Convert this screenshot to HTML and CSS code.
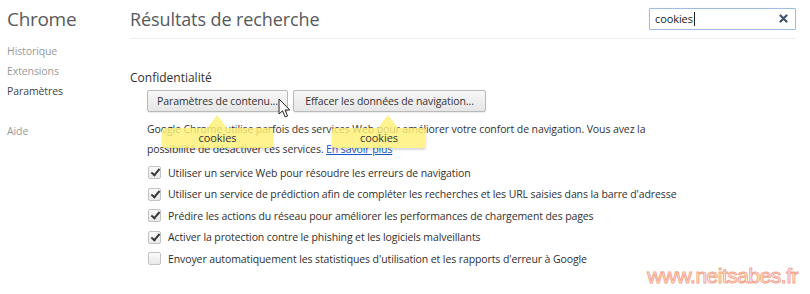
FILE: index.html
```html
<!DOCTYPE html>
<html lang="fr">
<head>
<meta charset="utf-8">
<title>Paramètres</title>
<link rel="stylesheet" href="styles.css">
</head>
<body>
<div class="page">
  <aside class="sidebar">
    <div class="brand">Chrome</div>
    <ul class="nav">
      <li>Historique</li>
      <li>Extensions</li>
      <li class="active">Paramètres</li>
      <li class="gap">Aide</li>
    </ul>
  </aside>
  <main class="main">
    <header class="head">
      <h1 class="title">Résultats de recherche</h1>
      <div class="search">
        <span class="query">cookies</span><span class="caret"></span>
        <svg class="clear" width="9" height="9" viewBox="0 0 9 9"><path d="M1.5 1.5 L7.5 7.5 M7.5 1.5 L1.5 7.5" stroke="#3f526b" stroke-width="2.2" stroke-linecap="round"/></svg>
      </div>
    </header>
    <section class="section">
      <h2 class="sec-title">Confidentialité</h2>
      <div class="content">
        <div class="buttons">
          <button class="btn btn-1">Paramètres de contenu...</button>
          <button class="btn btn-2">Effacer les données de navigation...</button>
        </div>
        <p class="desc">Google Chrome utilise parfois des services Web pour améliorer votre confort de navigation. Vous avez la possibilité de désactiver ces services. <a href="#">En savoir plus</a></p>
        <ul class="checks">
          <li><span class="box on"></span>Utiliser un service Web pour résoudre les erreurs de navigation</li>
          <li><span class="box on"></span>Utiliser un service de prédiction afin de compléter les recherches et les URL saisies dans la barre d'adresse</li>
          <li><span class="box on"></span>Prédire les actions du réseau pour améliorer les performances de chargement des pages</li>
          <li><span class="box on"></span>Activer la protection contre le phishing et les logiciels malveillants</li>
          <li><span class="box"></span>Envoyer automatiquement les statistiques d'utilisation et les rapports d'erreur à Google</li>
        </ul>
        <div class="tip tip-1"><span class="tip-arrow"></span>cookies</div>
        <div class="tip tip-2"><span class="tip-arrow"></span>cookies</div>
        <svg class="cursor" width="14" height="22" viewBox="0 0 14 22"><path d="M1 1 L1 16 L4.5 12.8 L7.2 19 L9.6 18 L7 12 L11.8 12 Z" fill="#fff" stroke="#222" stroke-width="1" stroke-linejoin="round"/></svg>
      </div>
    </section>
  </main>
  <div class="watermark">www.neitsabes.fr</div>
</div>
</body>
</html>
```
FILE: styles.css
```css
* { box-sizing: border-box; }
html, body { margin: 0; padding: 0; background: #fff; }
body {
  width: 810px;
  height: 294px;
  overflow: hidden;
  font-family: "Open Sans", "Noto Sans", sans-serif;
  font-size: 10.5px;
  letter-spacing: -0.1px;
  color: #303030;
}
.page {
  position: relative;
  display: flex;
  width: 810px;
  height: 294px;
}
.sidebar {
  width: 130px;
  flex: none;
  padding-left: 7px;
  padding-top: 6px;
}
.brand {
  font-size: 19px;
  line-height: 26px;
  color: #5a5a5a;
  letter-spacing: -0.3px;
}
.nav {
  list-style: none;
  margin: 0;
  padding: 9px 0 0 0;
}
.nav li {
  line-height: 20px;
  height: 20px;
  color: #9a9a9a;
}
.nav li.active { color: #444; }
.nav li.gap { margin-top: 20px; }

.main {
  flex: 1;
  padding-right: 14px;
}
.head {
  display: flex;
  align-items: center;
  justify-content: space-between;
  height: 39px;
  border-bottom: 1px solid #ececec;
  padding-bottom: 1px;
}
.title {
  margin: 0;
  font-weight: 400;
  font-size: 18px;
  color: #555a60;
  letter-spacing: -0.1px;
}
.search {
  width: 147px;
  height: 22px;
  border: 1px solid #9fbde3;
  border-radius: 1px;
  display: flex;
  align-items: center;
  padding: 0 7px 0 5px;
  box-shadow: 0 0 1px rgba(120,160,220,0.4);
}
.query { color: #222; font-size: 11px; }
.caret {
  width: 1px;
  height: 14px;
  background: #222;
  margin-left: 1px;
}
.clear { margin-left: auto; }

.section { padding-top: 31px; }
.sec-title {
  margin: 0;
  font-weight: 400;
  font-size: 12px;
  line-height: 16px;
  color: #303030;
  letter-spacing: 0;
}
.content {
  position: relative;
  padding-left: 17px;
  padding-top: 4px;
}
.buttons {
  display: flex;
  gap: 5px;
}
.btn {
  font-family: inherit;
  font-size: 10.5px;
  letter-spacing: -0.1px;
  white-space: nowrap;
  color: #333;
  height: 22px;
  padding: 0;
  border: 1px solid #b9b9b9;
  border-radius: 2px;
  background: linear-gradient(#f7f7f7, #e6e6e6);
  box-shadow: 0 1px 1px rgba(0,0,0,0.08);
}
.btn-1 { width: 141px; }
.btn-2 { width: 193px; }
.desc {
  margin: 7px 0 0 0;
  line-height: 20px;
  width: 525px;
  color: #333;
}
.desc a { color: #1a55c8; text-decoration: underline; }
.checks {
  list-style: none;
  margin: 3px 0 0 0;
  padding: 0;
}
.checks li {
  display: flex;
  align-items: center;
  height: 21.5px;
  gap: 7px;
}
.box {
  width: 13px;
  height: 13px;
  flex: none;
  border: 1px solid #c2c2c2;
  border-radius: 2px;
  background: linear-gradient(#fafafa, #e9e9e9);
  position: relative;
  margin-left: 1px;
}
.box.on::after {
  content: "";
  position: absolute;
  left: 4px;
  top: 0px;
  width: 3px;
  height: 7px;
  border-right: 2px solid #3a3a3a;
  border-bottom: 2px solid #3a3a3a;
  transform: rotate(40deg);
}
.tip {
  position: absolute;
  height: 20px;
  line-height: 20px;
  text-align: center;
  font-size: 11px;
  color: #333;
  background: rgba(255, 240, 120, 0.82);
  border-radius: 3px;
  box-shadow: 0 2px 2px rgba(0,0,0,0.15);
  top: 42px;
}
.tip-arrow {
  position: absolute;
  top: -13px;
  width: 0;
  height: 0;
  border-left: 10px solid transparent;
  border-right: 10px solid transparent;
  border-bottom: 13px solid rgba(255, 240, 120, 0.82);
}
.tip-1 { left: 32px; width: 111px; }
.tip-1 .tip-arrow { left: 45px; }
.tip-2 { left: 202px; width: 94px; }
.tip-2 .tip-arrow { left: 46px; }
.cursor {
  position: absolute;
  left: 148px;
  top: 12px;
}
.watermark {
  position: absolute;
  right: 12px;
  bottom: 6px;
  font-family: "Liberation Sans", Arial, sans-serif;
  font-size: 21px;
  color: transparent;
  -webkit-text-stroke: 1px #f3a68c;
  letter-spacing: -0.5px;
}
```
